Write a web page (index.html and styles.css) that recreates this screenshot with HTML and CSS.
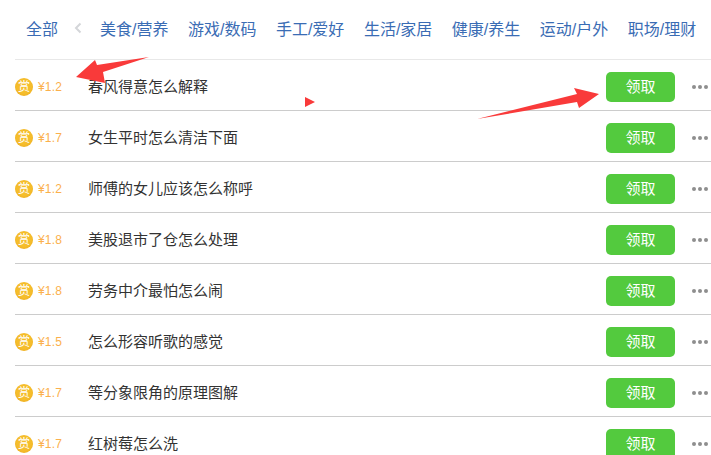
FILE: index.html
```html
<!DOCTYPE html>
<html lang="zh-CN">
<head>
    <meta charset="UTF-8">
    <meta name="viewport" content="width=device-width, initial-scale=1.0">
    <title>Document</title>

    <link rel="stylesheet" href="styles.css">
</head>

<body>
    <nav class="tabs">
        <a class="tab">全部</a>
        <svg class="tab-prev" width="8" height="12" viewBox="0 0 8 12"><path d="M6.5 1.5 2 6l4.5 4.5" fill="none" stroke="#d4d6d9" stroke-width="2"/></svg>
        <a class="tab">美食/营养</a>
        <a class="tab">游戏/数码</a>
        <a class="tab">手工/爱好</a>
        <a class="tab">生活/家居</a>
        <a class="tab">健康/养生</a>
        <a class="tab">运动/户外</a>
        <a class="tab">职场/理财</a>
    </nav>

    <main class="list">
        <div class="row">
            <span class="coin">赏</span><span class="price">¥1.2</span>
            <span class="title">春风得意怎么解释</span>
            <button class="get-btn">领取</button>
            <span class="more"><i></i><i></i><i></i></span>
        </div>
        <div class="row">
            <span class="coin">赏</span><span class="price">¥1.7</span>
            <span class="title">女生平时怎么清洁下面</span>
            <button class="get-btn">领取</button>
            <span class="more"><i></i><i></i><i></i></span>
        </div>
        <div class="row">
            <span class="coin">赏</span><span class="price">¥1.2</span>
            <span class="title">师傅的女儿应该怎么称呼</span>
            <button class="get-btn">领取</button>
            <span class="more"><i></i><i></i><i></i></span>
        </div>
        <div class="row">
            <span class="coin">赏</span><span class="price">¥1.8</span>
            <span class="title">美股退市了仓怎么处理</span>
            <button class="get-btn">领取</button>
            <span class="more"><i></i><i></i><i></i></span>
        </div>
        <div class="row">
            <span class="coin">赏</span><span class="price">¥1.8</span>
            <span class="title">劳务中介最怕怎么闹</span>
            <button class="get-btn">领取</button>
            <span class="more"><i></i><i></i><i></i></span>
        </div>
        <div class="row">
            <span class="coin">赏</span><span class="price">¥1.5</span>
            <span class="title">怎么形容听歌的感觉</span>
            <button class="get-btn">领取</button>
            <span class="more"><i></i><i></i><i></i></span>
        </div>
        <div class="row">
            <span class="coin">赏</span><span class="price">¥1.7</span>
            <span class="title">等分象限角的原理图解</span>
            <button class="get-btn">领取</button>
            <span class="more"><i></i><i></i><i></i></span>
        </div>
        <div class="row">
            <span class="coin">赏</span><span class="price">¥1.7</span>
            <span class="title">红树莓怎么洗</span>
            <button class="get-btn">领取</button>
            <span class="more"><i></i><i></i><i></i></span>
        </div>
    </main>

    <!-- red annotation arrows drawn over the screenshot -->
    <svg class="marks" width="711" height="455" viewBox="0 0 711 455">
        <polygon fill="#f93a3a" points="76,77 95,60 97,65 149,57 103,72 105,83"/>
        <polygon fill="#f93a3a" points="477,119 577,94 574,88 599,94 579,108 577,102"/>
        <polygon fill="#f93a3a" points="305,97 315,102 305,107"/>
    </svg>
</body>
</html>
```

FILE: styles.css
```css
body{
    margin: 0;
    height: 455px;
    overflow: hidden;
    position: relative;
    background-color: #fff;
    font-family: "Liberation Sans", "Noto Sans CJK SC", sans-serif;
}
.tabs
{
    display: flex;
    align-items: center;
    height: 59px;
    box-sizing: border-box;
    padding-left: 26px;
    padding-bottom: 3px;
    overflow: hidden;
    white-space: nowrap;
    font-size: 16px;
    color: #3a6cb4;
}
.tab{
    flex: none;
    margin-right: 19.5px;
}
.tab-prev{
    flex: none;
    margin-right: 18.5px;
    margin-left: -4px;
}
.list{
    margin-left: 15px;
    border-top: 1px solid #e8e8e8;
}
.row{
    display: flex;
    align-items: center;
    height: 51px;
    box-sizing: border-box;
    padding-top: 4px;
    border-bottom: 1px solid #cccccc;
}
.coin{
    width: 18px;
    height: 18px;
    flex: none;
    border-radius: 50%;
    background: radial-gradient(circle at 50% 45%, #f5bd2b 55%, #e8a11a 100%);
    color: #fff;
    font-size: 12px;
    line-height: 18px;
    text-align: center;
}
.price{
    width: 50px;
    margin-left: 5px;
    font-size: 12px;
    letter-spacing: .2px;
    color: #fbb04c;
}
.title{
    flex: 1;
    margin-bottom: 4px;
    font-size: 15px;
    color: #333;
}
.get-btn{
    width: 69px;
    height: 30px;
    padding: 0 0 3px;
    border: none;
    border-radius: 5px;
    background-color: #53ca3e;
    color: #fff;
    font-family: inherit;
    font-size: 15px;
}
.more{
    display: flex;
    gap: 2px;
    width: 36px;
    padding-left: 17px;
    box-sizing: border-box;
}
.more i{
    width: 4px;
    height: 4px;
    flex: none;
    border-radius: 50%;
    background-color: #8e8e8e;
}
.marks{
    position: absolute;
    left: 0;
    top: 0;
    pointer-events: none;
}
```
